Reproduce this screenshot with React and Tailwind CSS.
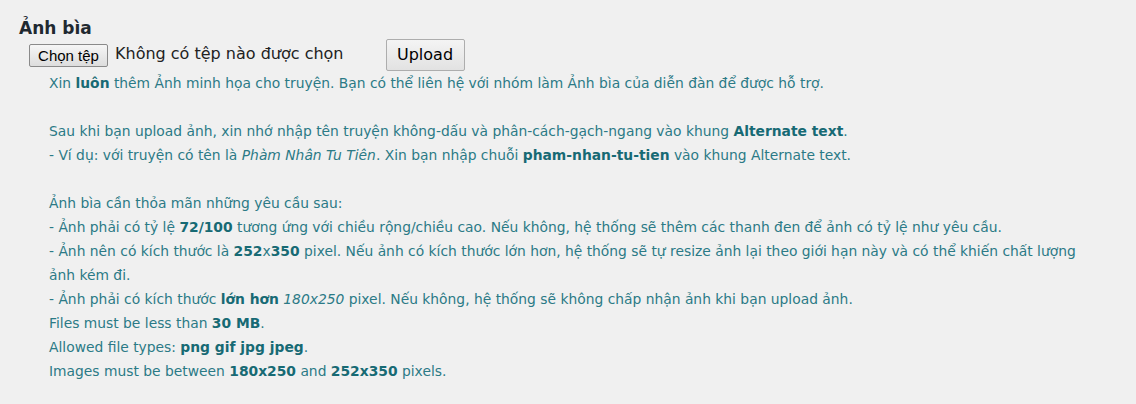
import React from "react";

const B = ({ children }) => <strong className="font-bold text-[#176a74]">{children}</strong>;

export default function App() {
  return (
    <div className="w-[1136px] h-[404px] bg-[#f0f0f0] overflow-hidden">
      <div className="pt-[17px] pl-[19px]">
        <div className="text-[17px] leading-[22px] font-bold text-[#1f2930] font-['DejaVu_Sans',sans-serif]">Ảnh bìa</div>
        <div className="flex items-start ml-[10px]">
          <div className="flex items-center mt-[5px]">
            <button className="h-[23px] w-[79px] border border-[#8a8a8a] rounded-[2px] bg-gradient-to-b from-[#f6f6f6] to-[#dddddd] text-[15px] text-black font-['Liberation_Sans',sans-serif] leading-none">Chọn tệp</button>
            <span className="ml-[7px] text-[16px] text-[#222] font-['DejaVu_Sans',sans-serif] leading-none -mt-[4px]">Không có tệp nào được chọn</span>
          </div>
          <button className="ml-[42px] w-[79px] h-[32px] border border-[#adadad] rounded-[2px] bg-gradient-to-b from-[#f4f4f4] to-[#e2e2e2] text-[16px] text-black font-['DejaVu_Sans',sans-serif] leading-none">Upload</button>
        </div>
        <div className="ml-[30px] w-[1056px] text-[13.85px] leading-[24px] text-[#2b7a86] font-['DejaVu_Sans',sans-serif]">
          <p>Xin <B>luôn</B> thêm Ảnh minh họa cho truyện. Bạn có thể liên hệ với nhóm làm Ảnh bìa của diễn đàn để được hỗ trợ.</p>
          <p>&nbsp;</p>
          <p>Sau khi bạn upload ảnh, xin nhớ nhập tên truyện không-dấu và phân-cách-gạch-ngang vào khung <B>Alternate text</B>.</p>
          <p>- Ví dụ: với truyện có tên là <em>Phàm Nhân Tu Tiên</em>. Xin bạn nhập chuỗi <B>pham-nhan-tu-tien</B> vào khung Alternate text.</p>
          <p>&nbsp;</p>
          <p>Ảnh bìa cần thỏa mãn những yêu cầu sau:</p>
          <p>- Ảnh phải có tỷ lệ <B>72/100</B> tương ứng với chiều rộng/chiều cao. Nếu không, hệ thống sẽ thêm các thanh đen để ảnh có tỷ lệ như yêu cầu.</p>
          <p>- Ảnh nên có kích thước là <B>252<span className="font-normal text-[#2b7a86]">x</span>350</B> pixel. Nếu ảnh có kích thước lớn hơn, hệ thống sẽ tự resize ảnh lại theo giới hạn này và có thể khiến chất lượng ảnh kém đi.</p>
          <p>- Ảnh phải có kích thước <B>lớn hơn</B> <em>180x250</em> pixel. Nếu không, hệ thống sẽ không chấp nhận ảnh khi bạn upload ảnh.</p>
          <p>Files must be less than <B>30 MB</B>.</p>
          <p>Allowed file types: <B>png gif jpg jpeg</B>.</p>
          <p>Images must be between <B>180x250</B> and <B>252x350</B> pixels.</p>
        </div>
      </div>
    </div>
  );
}
